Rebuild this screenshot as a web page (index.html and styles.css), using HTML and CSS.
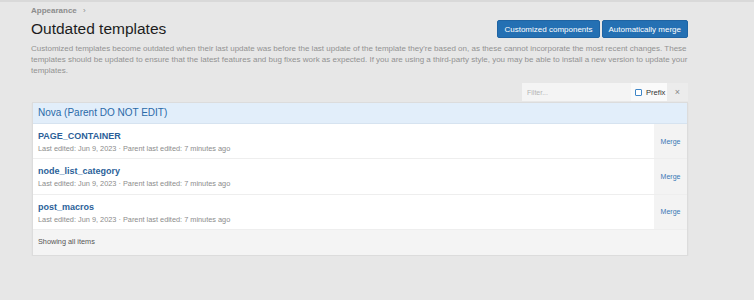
FILE: index.html
```html
<!DOCTYPE html>
<html lang="en">

<head>
    <meta charset="UTF-8">
    <meta name="viewport" content="width=device-width, initial-scale=1.0">
    <title>Outdated templates</title>
    <link rel="stylesheet" href="styles.css">
</head>

<body>
    <div class="trang">
        <div class="breadcrumb">Appearance <span class="mui-ten">›</span></div>

        <div class="tieu-de-hang">
            <h1>Outdated templates</h1>
            <div class="nut-nhom">
                <button class="nut">Customized components</button>
                <button class="nut">Automatically merge</button>
            </div>
        </div>

        <p class="mo-ta">Customized templates become outdated when their last update was before the last update of the template they're based on, as these cannot incorporate the most recent changes. These templates should be updated to ensure that the latest features and bug fixes work as expected. If you are using a third-party style, you may be able to install a new version to update your templates.</p>

        <div class="loc">
            <input type="text" placeholder="Filter...">
            <label class="tien-to"><span class="o-chon"></span>Prefix</label>
            <span class="xoa">×</span>
        </div>

        <div class="khoi">
            <div class="khoi-dau">Nova (Parent DO NOT EDIT)</div>

            <div class="dong">
                <div class="dong-chinh">
                    <a class="ten-mau">PAGE_CONTAINER</a>
                    <div class="thong-tin">Last edited: Jun 9, 2023 · Parent last edited: 7 minutes ago</div>
                </div>
                <a class="gop">Merge</a>
            </div>

            <div class="dong">
                <div class="dong-chinh">
                    <a class="ten-mau">node_list_category</a>
                    <div class="thong-tin">Last edited: Jun 9, 2023 · Parent last edited: 7 minutes ago</div>
                </div>
                <a class="gop">Merge</a>
            </div>

            <div class="dong">
                <div class="dong-chinh">
                    <a class="ten-mau">post_macros</a>
                    <div class="thong-tin">Last edited: Jun 9, 2023 · Parent last edited: 7 minutes ago</div>
                </div>
                <a class="gop">Merge</a>
            </div>

            <div class="khoi-chan">Showing all items</div>
        </div>
    </div>
</body>

</html>
```

FILE: styles.css
```css
* {
    box-sizing: border-box;
}

body {
    margin: 0;
    background-color: #e7e7e7;
    font-family: "Liberation Sans", Arial, sans-serif;
    border-top: 2px solid #d9d9d9;
}

.trang {
    padding: 4px 66px 0 31px;
}

.breadcrumb {
    font-size: 8px;
    font-weight: bold;
    color: #8c8c8c;
    height: 10px;
    line-height: 10px;
}

.breadcrumb .mui-ten {
    font-weight: normal;
    margin-left: 4px;
}

.tieu-de-hang {
    display: flex;
    justify-content: space-between;
    align-items: center;
    margin-top: 4px;
}

.tieu-de-hang h1 {
    margin: 0;
    font-size: 15.5px;
    font-weight: normal;
    color: #1d1d1d;
}

.nut-nhom {
    display: flex;
    gap: 2px;
}

.nut {
    font-family: inherit;
    font-size: 8px;
    color: #fff;
    background-color: #2470b3;
    border: 1px solid #1f64a3;
    border-radius: 2px;
    height: 18px;
    padding: 0 6px;
}

.mo-ta {
    margin: 5px 0 0 0;
    font-size: 8px;
    line-height: 11px;
    color: #929292;
}

.loc {
    display: flex;
    justify-content: flex-end;
    margin-top: 7px;
    height: 18px;
}

.loc input {
    width: 109px;
    border: 0;
    background-color: #f4f4f4;
    font-family: inherit;
    font-size: 7px;
    padding: 0 5px;
    color: #333;
}

.loc input::placeholder {
    color: #b5b5b5;
}

.tien-to {
    display: flex;
    align-items: center;
    gap: 4px;
    width: 36px;
    padding-left: 4px;
    background-color: #fafafa;
    font-size: 7.6px;
    color: #333;
}

.o-chon {
    width: 7px;
    height: 7px;
    border: 1px solid #3f86c7;
    border-radius: 1px;
    background-color: #fff;
}

.xoa {
    width: 21px;
    display: flex;
    align-items: center;
    justify-content: center;
    background-color: #ececec;
    color: #888;
    font-size: 9px;
}

.khoi {
    margin-top: 1px;
    margin-left: 1px;
    background-color: #fff;
    border: 1px solid #dcdcdc;
    box-shadow: 0 1px 1px rgba(0, 0, 0, 0.08);
}

.khoi-dau {
    height: 21px;
    line-height: 20px;
    padding-left: 5px;
    background-color: #e2eefa;
    color: #2a6aa8;
    font-size: 10px;
    border-bottom: 1px solid #d6e3f0;
}

.dong {
    display: flex;
    height: 35.3px;
    border-bottom: 1px solid #eeeeee;
}

.dong-chinh {
    flex: 1;
    padding: 7px 5px 0 5px;
}

.ten-mau {
    display: block;
    font-size: 9px;
    font-weight: bold;
    color: #2b5f99;
    line-height: 11px;
}

.thong-tin {
    font-size: 7.35px;
    color: #8c8c8c;
    margin-top: 2px;
}

.gop {
    width: 33px;
    display: flex;
    align-items: center;
    justify-content: center;
    background-color: #f3f3f3;
    color: #3a78b5;
    font-size: 7px;
}

.khoi-chan {
    height: 25px;
    line-height: 24px;
    padding-left: 5px;
    background-color: #f4f4f4;
    font-size: 7.3px;
    color: #555;
}
```
